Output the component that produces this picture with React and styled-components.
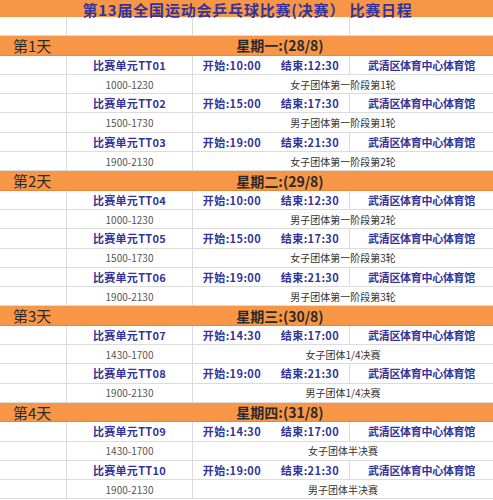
import React from "react";
import styled, { createGlobalStyle } from "styled-components";

const GlobalStyle = createGlobalStyle`
  html, body {
    margin: 0;
    padding: 0;
    background: #fff;
  }
  body {
    font-family: "Noto Sans CJK SC", "Noto Sans", sans-serif;
  }
`;

const days = [
  {
    label: "第1天",
    date: "星期一:(28/8)",
    sessions: [
      { unit: "TT01", start: "10:00", end: "12:30", time: "1000-1230", desc: "女子团体第一阶段第1轮" },
      { unit: "TT02", start: "15:00", end: "17:30", time: "1500-1730", desc: "男子团体第一阶段第1轮" },
      { unit: "TT03", start: "19:00", end: "21:30", time: "1900-2130", desc: "女子团体第一阶段第2轮" },
    ],
  },
  {
    label: "第2天",
    date: "星期二:(29/8)",
    sessions: [
      { unit: "TT04", start: "10:00", end: "12:30", time: "1000-1230", desc: "男子团体第一阶段第2轮" },
      { unit: "TT05", start: "15:00", end: "17:30", time: "1500-1730", desc: "女子团体第一阶段第3轮" },
      { unit: "TT06", start: "19:00", end: "21:30", time: "1900-2130", desc: "男子团体第一阶段第3轮" },
    ],
  },
  {
    label: "第3天",
    date: "星期三:(30/8)",
    sessions: [
      { unit: "TT07", start: "14:30", end: "17:00", time: "1430-1700", desc: "女子团体1/4决赛" },
      { unit: "TT08", start: "19:00", end: "21:30", time: "1900-2130", desc: "男子团体1/4决赛" },
    ],
  },
  {
    label: "第4天",
    date: "星期四:(31/8)",
    sessions: [
      { unit: "TT09", start: "14:30", end: "17:00", time: "1430-1700", desc: "女子团体半决赛" },
      { unit: "TT10", start: "19:00", end: "21:30", time: "1900-2130", desc: "男子团体半决赛" },
    ],
  },
];

const Sheet = styled.div`
  display: grid;
  grid-template-columns: 67px 126px 78px 79px 143px;
  grid-template-rows: 17px;
  grid-auto-rows: 19.3px;
  width: 493px;
`;

const Title = styled.div`
  grid-column: 1 / -1;
  background: #f79646;
  color: #333399;
  display: flex;
  align-items: center;
  justify-content: center;
  padding: 1px 0 0 2px;
  box-sizing: border-box;
`;

const TitleText = styled.span`
  font-size: 15px;
  font-weight: 700;
  line-height: 1;
  letter-spacing: 0.8px;
  white-space: pre;
`;

const Cell = styled.div`
  box-sizing: border-box;
  grid-column: ${(p) => (p.$span ? `span ${p.$span}` : "auto")};
  border-bottom: 1px solid #dcdcdc;
  border-right: ${(p) => (p.$edge ? "1px solid #dcdcdc" : "none")};
  display: flex;
  align-items: center;
  justify-content: ${(p) => p.$align || "center"};
  white-space: pre;
  overflow: hidden;
`;

const Band = styled.div`
  box-sizing: border-box;
  grid-column: ${(p) => (p.$wide ? "2 / -1" : "1")};
  background: #f79646;
  color: #2a2a2a;
  display: flex;
  align-items: center;
  justify-content: ${(p) => (p.$wide ? "center" : "flex-start")};
  padding-left: ${(p) => (p.$wide ? "0" : "13px")};
  font-size: ${(p) => (p.$wide ? "14px" : "15px")};
  font-weight: ${(p) => (p.$wide ? 700 : 400)};
  border-bottom: 1px solid #e8863a;
`;

const Strong = styled.span`
  color: #333399;
  font-size: 11px;
  font-weight: 700;
  letter-spacing: ${(p) => p.$spread || "0"};
`;

const Plain = styled.span`
  color: ${(p) => p.$tone || "#333"};
  font-size: 10px;
`;

function Session({ s }) {
  return (
    <>
      <Cell $edge />
      <Cell $edge>
        <Strong $spread="0.3px">比赛单元{s.unit}</Strong>
      </Cell>
      <Cell>
        <Strong $spread="0.4px">开始:{s.start}</Strong>
      </Cell>
      <Cell $edge>
        <Strong $spread="0.4px">结束:{s.end}</Strong>
      </Cell>
      <Cell>
        <Strong $spread="-0.3px">武清区体育中心体育馆</Strong>
      </Cell>
      <Cell $edge />
      <Cell $edge>
        <Plain $tone="#555">{s.time}</Plain>
      </Cell>
      <Cell $span={3}>
        <Plain>{s.desc}</Plain>
      </Cell>
    </>
  );
}

export default function App() {
  return (
    <>
      <GlobalStyle />
      <Sheet>
        <Title>
          <TitleText>第13届全国运动会乒乓球比赛(决赛） 比赛日程</TitleText>
        </Title>
        <Cell $edge />
        <Cell $edge />
        <Cell />
        <Cell $edge />
        <Cell />
        {days.map((d) => (
          <React.Fragment key={d.label}>
            <Band>{d.label}</Band>
            <Band $wide>{d.date}</Band>
            {d.sessions.map((s) => (
              <Session key={s.unit} s={s} />
            ))}
          </React.Fragment>
        ))}
      </Sheet>
    </>
  );
}
